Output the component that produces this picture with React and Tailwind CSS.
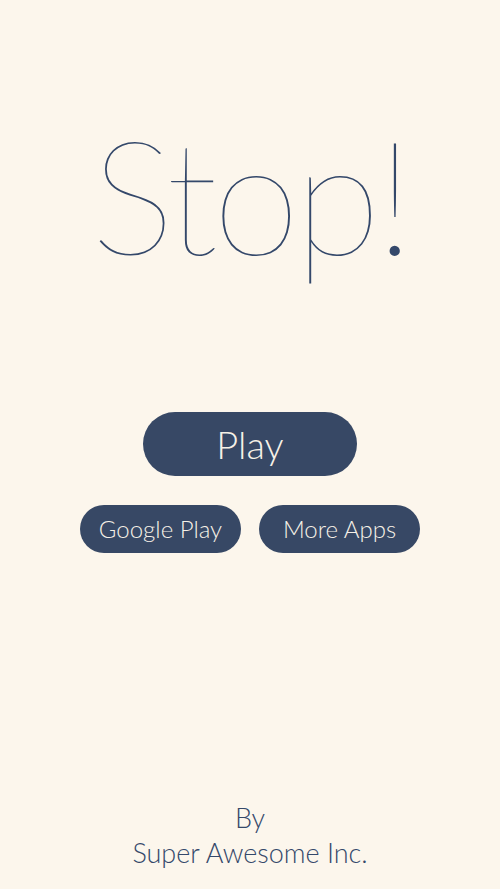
export default function App() {
  return (
    <div
      className="flex h-[889px] w-full flex-col items-center bg-[#fcf6ec] text-[#34486a]"
      style={{ fontFamily: 'Lato, "Open Sans", sans-serif' }}
    >
      <h1 className="mt-[104px] text-[158px] font-thin leading-[180px] tracking-[-5px]">Stop!</h1>

      <div className="mt-[128px] flex flex-col items-center">
        <button className="h-[64px] w-[214px] rounded-full bg-[#374865] text-[38px] font-light text-[#f6f1e7]">
          Play
        </button>
        <div className="mt-[29px] flex gap-[18px]">
          <button className="h-[48px] w-[161px] rounded-full bg-[#374865] text-[24px] font-light text-[#f6f1e7]">
            Google Play
          </button>
          <button className="h-[48px] w-[161px] rounded-full bg-[#374865] text-[24px] font-light text-[#f6f1e7]">
            More Apps
          </button>
        </div>
      </div>

      <footer className="mt-auto mb-[19px] text-center text-[27px] font-light leading-[35px]">
        <p>By</p>
        <p>Super Awesome Inc.</p>
      </footer>
    </div>
  );
}
